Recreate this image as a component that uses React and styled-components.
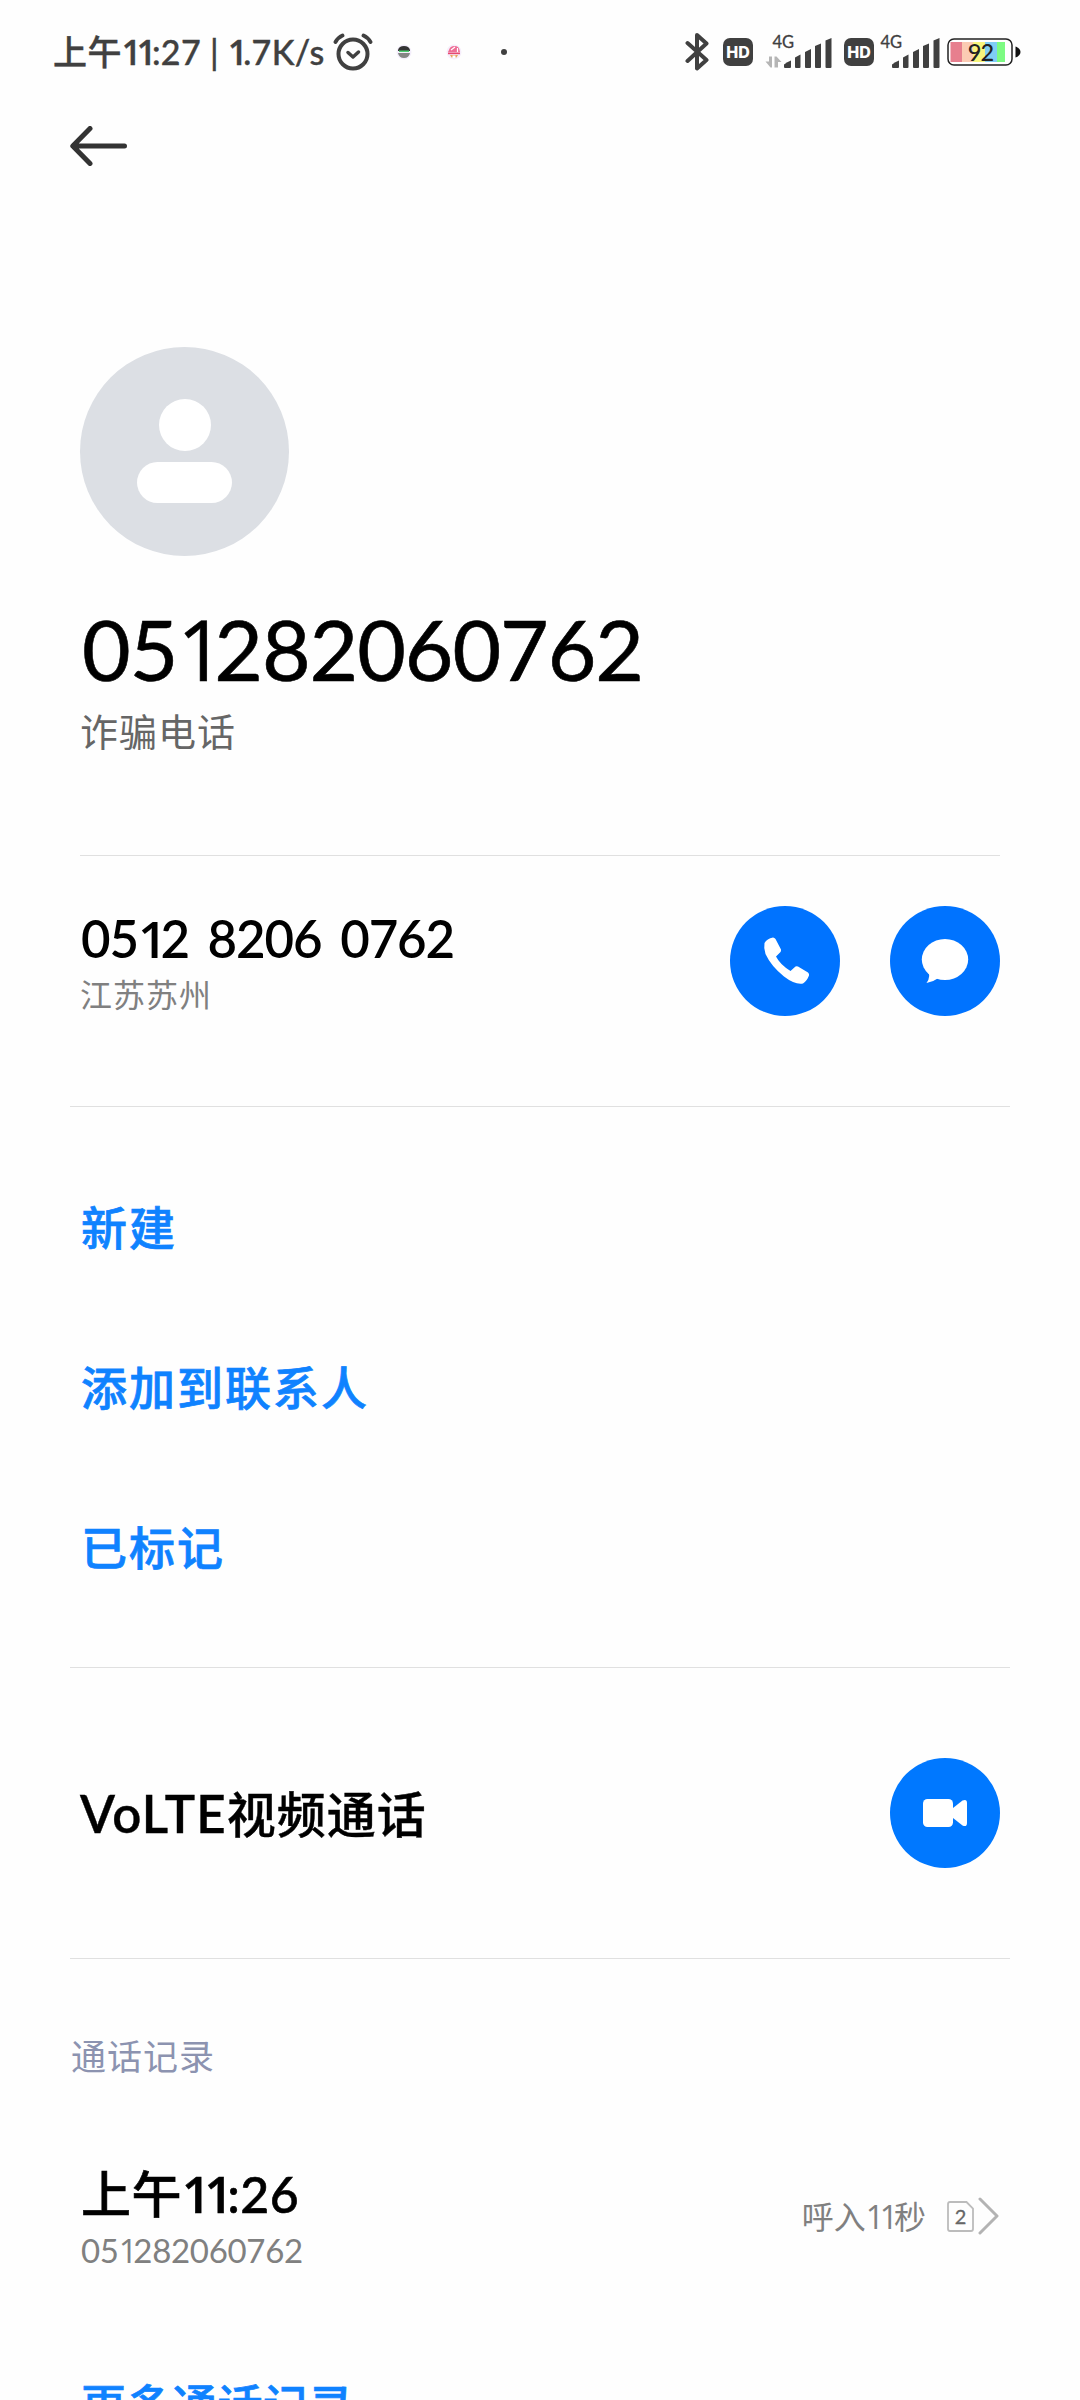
import React from "react";
import styled, { createGlobalStyle } from "styled-components";

export default function App() {
  return (
    <>
      <GlobalStyle />
      <Screen>
        <StatusBar>
          <StatusText>
            上午
            <Digits text="11:27 | 1.7K/s" />
          </StatusText>
          <AlarmIcon />
          <GreenAppIcon />
          <PinkAppIcon />
          <MoreDot />
          <StatusRight>
            <BluetoothIcon />
            <HdBadge>HD</HdBadge>
            <SignalIcon data />
            <HdBadge>HD</HdBadge>
            <SignalIcon />
            <BatteryIcon level="92" />
          </StatusRight>
        </StatusBar>

        <Header>
          <svg width="57" height="40" viewBox="0 0 57 40">
            <path
              d="M54.5 20H3M20 2.5L2.8 20L20 37.5"
              fill="none"
              stroke="#333"
              strokeWidth="5"
              strokeLinecap="round"
              strokeLinejoin="round"
            />
          </svg>
        </Header>

        <Profile>
          <Avatar>
            <AvatarHead />
            <AvatarBody />
          </Avatar>
          <ProfileName>
            <Digits text="051282060762" />
          </ProfileName>
          <ProfileTag>诈骗电话</ProfileTag>
        </Profile>

        <Divider $inset />
        <NumberRow>
          <div>
            <Number>
              <Digits text="0512 8206 0762" />
            </Number>
            <Location>江苏苏州</Location>
          </div>
          <Actions>
            <RoundButton aria-label="call">
              <svg width="110" height="110" viewBox="0 0 110 110">
                <path
                  d="M34.5 37Q37 32.5 43 31.5Q44.5 31.8 45.5 33L51 43.5Q51.2 45 50.5 46L46 50.5Q50 58.5 60.5 65L65.5 60.5Q66.5 60 68 60.5L78 66.5Q79.5 67.8 79 69.5Q77 75 73 77.5Q65 79 54 70.5Q41 60 35.5 48Q33.5 42 34.5 37Z"
                  fill="#fff"
                />
              </svg>
            </RoundButton>
            <RoundButton aria-label="message">
              <svg width="110" height="110" viewBox="0 0 110 110">
                <ellipse cx="55" cy="53.5" rx="23.2" ry="20.5" fill="#fff" />
                <path
                  d="M35 62Q39.5 66 39.2 70Q38.8 74.5 36.5 77Q43 76 48.5 72L52 66Z"
                  fill="#fff"
                />
              </svg>
            </RoundButton>
          </Actions>
        </NumberRow>

        <Divider />
        <LinkList>
          <LinkRow>新建</LinkRow>
          <LinkRow>添加到联系人</LinkRow>
          <LinkRow>已标记</LinkRow>
        </LinkList>

        <Divider />
        <VideoRow>
          <RowTitle>
            <Latin>VoLTE</Latin>视频通话
          </RowTitle>
          <RoundButton aria-label="video" $light>
            <svg width="110" height="110" viewBox="0 0 110 110">
              <rect x="33" y="41" width="30" height="28" rx="4.5" fill="#fff" />
              <path
                d="M63 50L72.5 42.5Q77 40.5 77 45V65Q77 69.5 72.5 67.5L63 60Z"
                fill="#fff"
              />
            </svg>
          </RoundButton>
        </VideoRow>

        <Divider />
        <SectionTitle>通话记录</SectionTitle>
        <LogRow>
          <div>
            <LogTime>
              上午
              <Digits text="11:26" />
            </LogTime>
            <LogNumber>
              <Digits text="051282060762" />
            </LogNumber>
          </div>
          <LogInfo>
            <span>
              呼入
              <Digits text="11" />秒
            </span>
            <SimIcon />
            <Chevron />
          </LogInfo>
        </LogRow>
        <MoreLink>更多通话记录</MoreLink>
      </Screen>
    </>
  );
}

// "1" is a plain stroke, set narrower than the other figures
function Digits({ text }) {
  return text
    .split("")
    .map((c, i) => (c === "1" ? <One key={i}>1</One> : c));
}

function AlarmIcon() {
  return (
    <Alarm width="40" height="38" viewBox="0 0 40 38">
      <g fill="none" stroke="#404040" strokeLinecap="round" strokeLinejoin="round">
        <circle cx="20" cy="21" r="14.5" strokeWidth="4" />
        <path d="M15 19.5L20 24L25.5 19" strokeWidth="3.5" />
        <path d="M2.5 9Q5 4.5 9.5 2.5M30.5 2.5Q35 4.5 37.5 9" strokeWidth="3.8" />
      </g>
    </Alarm>
  );
}

function GreenAppIcon() {
  return (
    <AppDot viewBox="0 0 16 16">
      <circle cx="8" cy="8" r="7.5" fill="#f3eefb" />
      <path d="M2 6Q3 2 8 2T14 6V7H2Z" fill="#333" />
      <path d="M3 6.5H13V8H3Z" fill="#4fd072" />
      <path d="M2 9H14Q13 14 8 14T2 9Z" fill="#858585" />
    </AppDot>
  );
}

function PinkAppIcon() {
  return (
    <AppDot viewBox="0 0 16 16">
      <circle cx="8" cy="8" r="7.5" fill="#f6eefb" />
      <path d="M3 6Q4 2 8.5 2T13.5 6L14 8H2Z" fill="#ee6d95" />
      <path d="M9 3L5 6M11.5 4V8" stroke="#fff" strokeWidth="1.2" />
      <path d="M2 8.5H14V10.2H2Z" fill="#e8476f" />
      <path d="M4 11H12L10.5 13.5H5.5Z" fill="#e5a35f" />
      <path d="M6.5 11.5H9.5V14H6.5Z" fill="#fff" />
    </AppDot>
  );
}

function BluetoothIcon() {
  return (
    <svg width="25" height="40" viewBox="0 0 25 40">
      <path
        d="M2.5 11L21.5 28L12 36.5V3L21.5 11.5L2.5 29"
        fill="none"
        stroke="#404040"
        strokeWidth="4"
        strokeLinecap="round"
        strokeLinejoin="round"
      />
    </svg>
  );
}

function SignalIcon({ data }) {
  return (
    <Signal $data={data} width="68" height="40" viewBox="0 -4 68 40">
      <text
        x="7.5"
        y="15"
        fontFamily="Lato, sans-serif"
        fontSize="16.5"
        fill="#404040"
        stroke="#404040"
        strokeWidth="0.3"
      >
        4G
      </text>
      {data && (
        <path
          d="M0.5 28.5H4V23.5H7V34.5H5.5ZM9.5 34.5V23.5H11.5L16.5 29H13V34.5Z"
          fill="#b5b5b5"
        />
      )}
      <g fill="#404040">
        <path d="M19 34V31.5Q22 29 26 27.5V34Q26 35 25 35H20Q19 35 19 34Z" />
        <path d="M30 34V24.5L35.5 21.5V34Q35.5 35 34.5 35H31Q30 35 30 34Z" />
        <path d="M40 34V19L46 16V34Q46 35 45 35H41Q40 35 40 34Z" />
        <path d="M50 34V13L56 10.5V34Q56 35 55 35H51Q50 35 50 34Z" />
        <path d="M60.5 34V7.5L66.5 5V34Q66.5 35 65.5 35H61.5Q60.5 35 60.5 34Z" />
      </g>
    </Signal>
  );
}

function BatteryIcon({ level }) {
  return (
    <Battery width="74" height="28" viewBox="0 0 74 28">
      <rect x="1" y="1" width="64" height="26" rx="6" fill="#fff" stroke="#222" strokeWidth="1.5" />
      <rect x="3.5" y="4" width="11.5" height="20" fill="#e77f8e" />
      <rect x="15" y="4" width="11" height="20" fill="#fbcbb3" />
      <rect x="26" y="4" width="12" height="20" fill="#f8f57c" />
      <rect x="38" y="4" width="12" height="20" fill="#80cdf5" />
      <rect x="50" y="4" width="8" height="20" fill="#7dfb83" />
      <path d="M68.5 8.5Q73.5 10.5 73.5 14T68.5 19.5Z" fill="#111" />
      <text
        x="33.5"
        y="22.5"
        textAnchor="middle"
        fontFamily="Lato, sans-serif"
        fontWeight="500"
        fontSize="23.5"
        letterSpacing="-1"
        fill="#222"
      >
        {level}
      </text>
    </Battery>
  );
}

function SimIcon() {
  return (
    <Sim width="27" height="31" viewBox="0 0 27 31">
      <path
        d="M3 1H19.5L26 7.5V28Q26 30 24 30H3Q1 30 1 28V3Q1 1 3 1Z"
        fill="none"
        stroke="#bcbcbc"
        strokeWidth="1.8"
      />
      <text
        x="13.5"
        y="22.5"
        textAnchor="middle"
        fontFamily="Lato, sans-serif"
        fontSize="20"
        fill="#666"
        stroke="#666"
        strokeWidth="0.3"
      >
        2
      </text>
    </Sim>
  );
}

function Chevron() {
  return (
    <svg width="21" height="38" viewBox="0 0 21 38">
      <path
        d="M2 2L19 19L2 36"
        fill="none"
        stroke="#b3b3b3"
        strokeWidth="3"
        strokeLinecap="round"
        strokeLinejoin="round"
      />
    </svg>
  );
}

const GlobalStyle = createGlobalStyle`
  * {
    box-sizing: border-box;
  }
  body {
    margin: 0;
    background-color: #fefefe;
  }
`;

const Screen = styled.div`
  display: flex;
  flex-direction: column;
  width: 1080px;
  height: 2400px;
  overflow: hidden;
  background-color: #fefefe;
  color: #000;
  font-family: Lato, "Noto Sans CJK SC", sans-serif;
  white-space: nowrap;

  > * {
    flex-shrink: 0;
  }
  svg {
    display: block;
    flex-shrink: 0;
  }
`;

const One = styled.span`
  font-family: "Open Sans", sans-serif;
  letter-spacing: -0.13em;
  line-height: 1;
`;

const StatusBar = styled.div`
  display: flex;
  align-items: center;
  height: 104px;
  padding: 0 59px 0 53px;
  color: #404040;
`;

const StatusText = styled.span`
  width: 280px;
  font-size: 34px;
  font-weight: 500;
  letter-spacing: 0.4px;
  line-height: 50px;
  -webkit-text-stroke: 0.4px #404040;

  ${One} {
    font-weight: 600;
  }
`;

const Alarm = styled.svg`
  margin-right: 23px;
`;

const AppDot = styled.svg`
  width: 16px;
  height: 16px;
  margin-right: 34px;
`;

const MoreDot = styled.span`
  width: 6px;
  height: 6px;
  margin-left: 5px;
  border-radius: 50%;
  background-color: #404040;
`;

const StatusRight = styled.div`
  display: flex;
  align-items: center;
  margin-left: auto;
`;

const HdBadge = styled.span`
  width: 30px;
  margin-left: 13px;
  border-radius: 7px;
  background-color: #404040;
  color: #fff;
  font-family: Inter, sans-serif;
  font-size: 16px;
  font-weight: 800;
  line-height: 28px;
  text-align: center;
`;

const Signal = styled.svg`
  margin: 0 -2px 6px ${(props) => (props.$data ? 12 : -1)}px;
`;

const Battery = styled.svg`
  margin-left: 8px;
`;

const Header = styled.div`
  display: flex;
  height: 243px;
  padding: 22px 70px 0;
`;

const Profile = styled.div`
  height: 508px;
  padding: 0 80px;
`;

const Avatar = styled.div`
  display: flex;
  flex-direction: column;
  align-items: center;
  width: 209px;
  height: 209px;
  padding-top: 52px;
  border-radius: 50%;
  background-color: #dcdfe4;
`;

const AvatarHead = styled.div`
  width: 52px;
  height: 52px;
  border-radius: 50%;
  background-color: #fff;
`;

const AvatarBody = styled.div`
  width: 95px;
  height: 41px;
  margin-top: 11px;
  border-radius: 21px;
  background-color: #fff;
`;

const ProfileName = styled.h1`
  height: 100px;
  margin: 43px 0 0 2px;
  font-size: 84px;
  font-weight: 400;
  letter-spacing: -1.1px;
  line-height: 100px;
  -webkit-text-stroke: 0.6px #000;
`;

const ProfileTag = styled.div`
  margin-top: 7px;
  color: #666;
  font-size: 38px;
  letter-spacing: 1px;
  line-height: 50px;
`;

const Divider = styled.div`
  height: 1px;
  margin: 0 ${(props) => (props.$inset ? 80 : 70)}px;
  background-color: #e0e0e0;
`;

const NumberRow = styled.div`
  display: flex;
  justify-content: space-between;
  height: 250px;
  padding: 50px 80px 0;
`;

const Number = styled.div`
  height: 60px;
  margin: 3px 0 0 1px;
  font-size: 51px;
  font-weight: 600;
  letter-spacing: -1.1px;
  line-height: 60px;
  word-spacing: 7px;
`;

const Location = styled.div`
  margin-top: 6px;
  color: #808080;
  font-size: 32px;
  letter-spacing: 1px;
  line-height: 40px;
`;

const Actions = styled.div`
  display: flex;
  gap: 50px;
`;

const RoundButton = styled.button`
  width: 110px;
  height: 110px;
  padding: 0;
  border: none;
  border-radius: 50%;
  background-color: ${(props) => (props.$light ? "#0078ff" : "#0073ff")};
`;

const LinkList = styled.div`
  height: 560px;
  padding: 41px 81px 0;
`;

const LinkRow = styled.div`
  color: #0f82ff;
  font-size: 46px;
  font-weight: 500;
  letter-spacing: 2px;
  line-height: 160px;
  -webkit-text-stroke: 0.7px #0f82ff;
`;

const VideoRow = styled.div`
  display: flex;
  align-items: center;
  justify-content: space-between;
  height: 290px;
  padding: 0 80px;
`;

const RowTitle = styled.div`
  padding-top: 1px;
  font-size: 49px;
  font-weight: 500;
  letter-spacing: 1px;
  line-height: 72px;
  -webkit-text-stroke: 0.4px #000;
`;

const Latin = styled.span`
  font-size: 51px;
  font-weight: 600;
  letter-spacing: 1.2px;
`;

const SectionTitle = styled.div`
  height: 196px;
  padding: 69px 71px 0;
  color: #8c93b0;
  font-size: 35px;
  letter-spacing: 1px;
  line-height: 56px;
`;

const LogRow = styled.div`
  display: flex;
  align-items: flex-start;
  justify-content: space-between;
  height: 216px;
  padding: 6px 81px 0 81px;
`;

const LogTime = styled.div`
  height: 66px;
  font-size: 50px;
  font-weight: 500;
  letter-spacing: 0.5px;
  line-height: 66px;
  -webkit-text-stroke: 0.6px #000;

  ${One} {
    font-weight: 600;
    letter-spacing: -0.12em;
  }
`;

const LogNumber = styled.div`
  height: 40px;
  margin-top: 3px;
  color: #808080;
  font-size: 33px;
  letter-spacing: -0.3px;
  line-height: 40px;
`;

const LogInfo = styled.div`
  display: flex;
  align-items: center;
  height: 38px;
  margin-top: 36px;
  color: #808080;
  font-size: 32px;

  > span {
    padding-bottom: 2px;
  }
`;

const Sim = styled.svg`
  margin-right: 4px;
  margin-left: 21px;
`;

const MoreLink = styled.div`
  padding: 0 81px;
  color: #0f82ff;
  font-size: 45px;
  font-weight: 500;
  letter-spacing: 0.5px;
  line-height: 70px;
  -webkit-text-stroke: 0.7px #0f82ff;
`;
